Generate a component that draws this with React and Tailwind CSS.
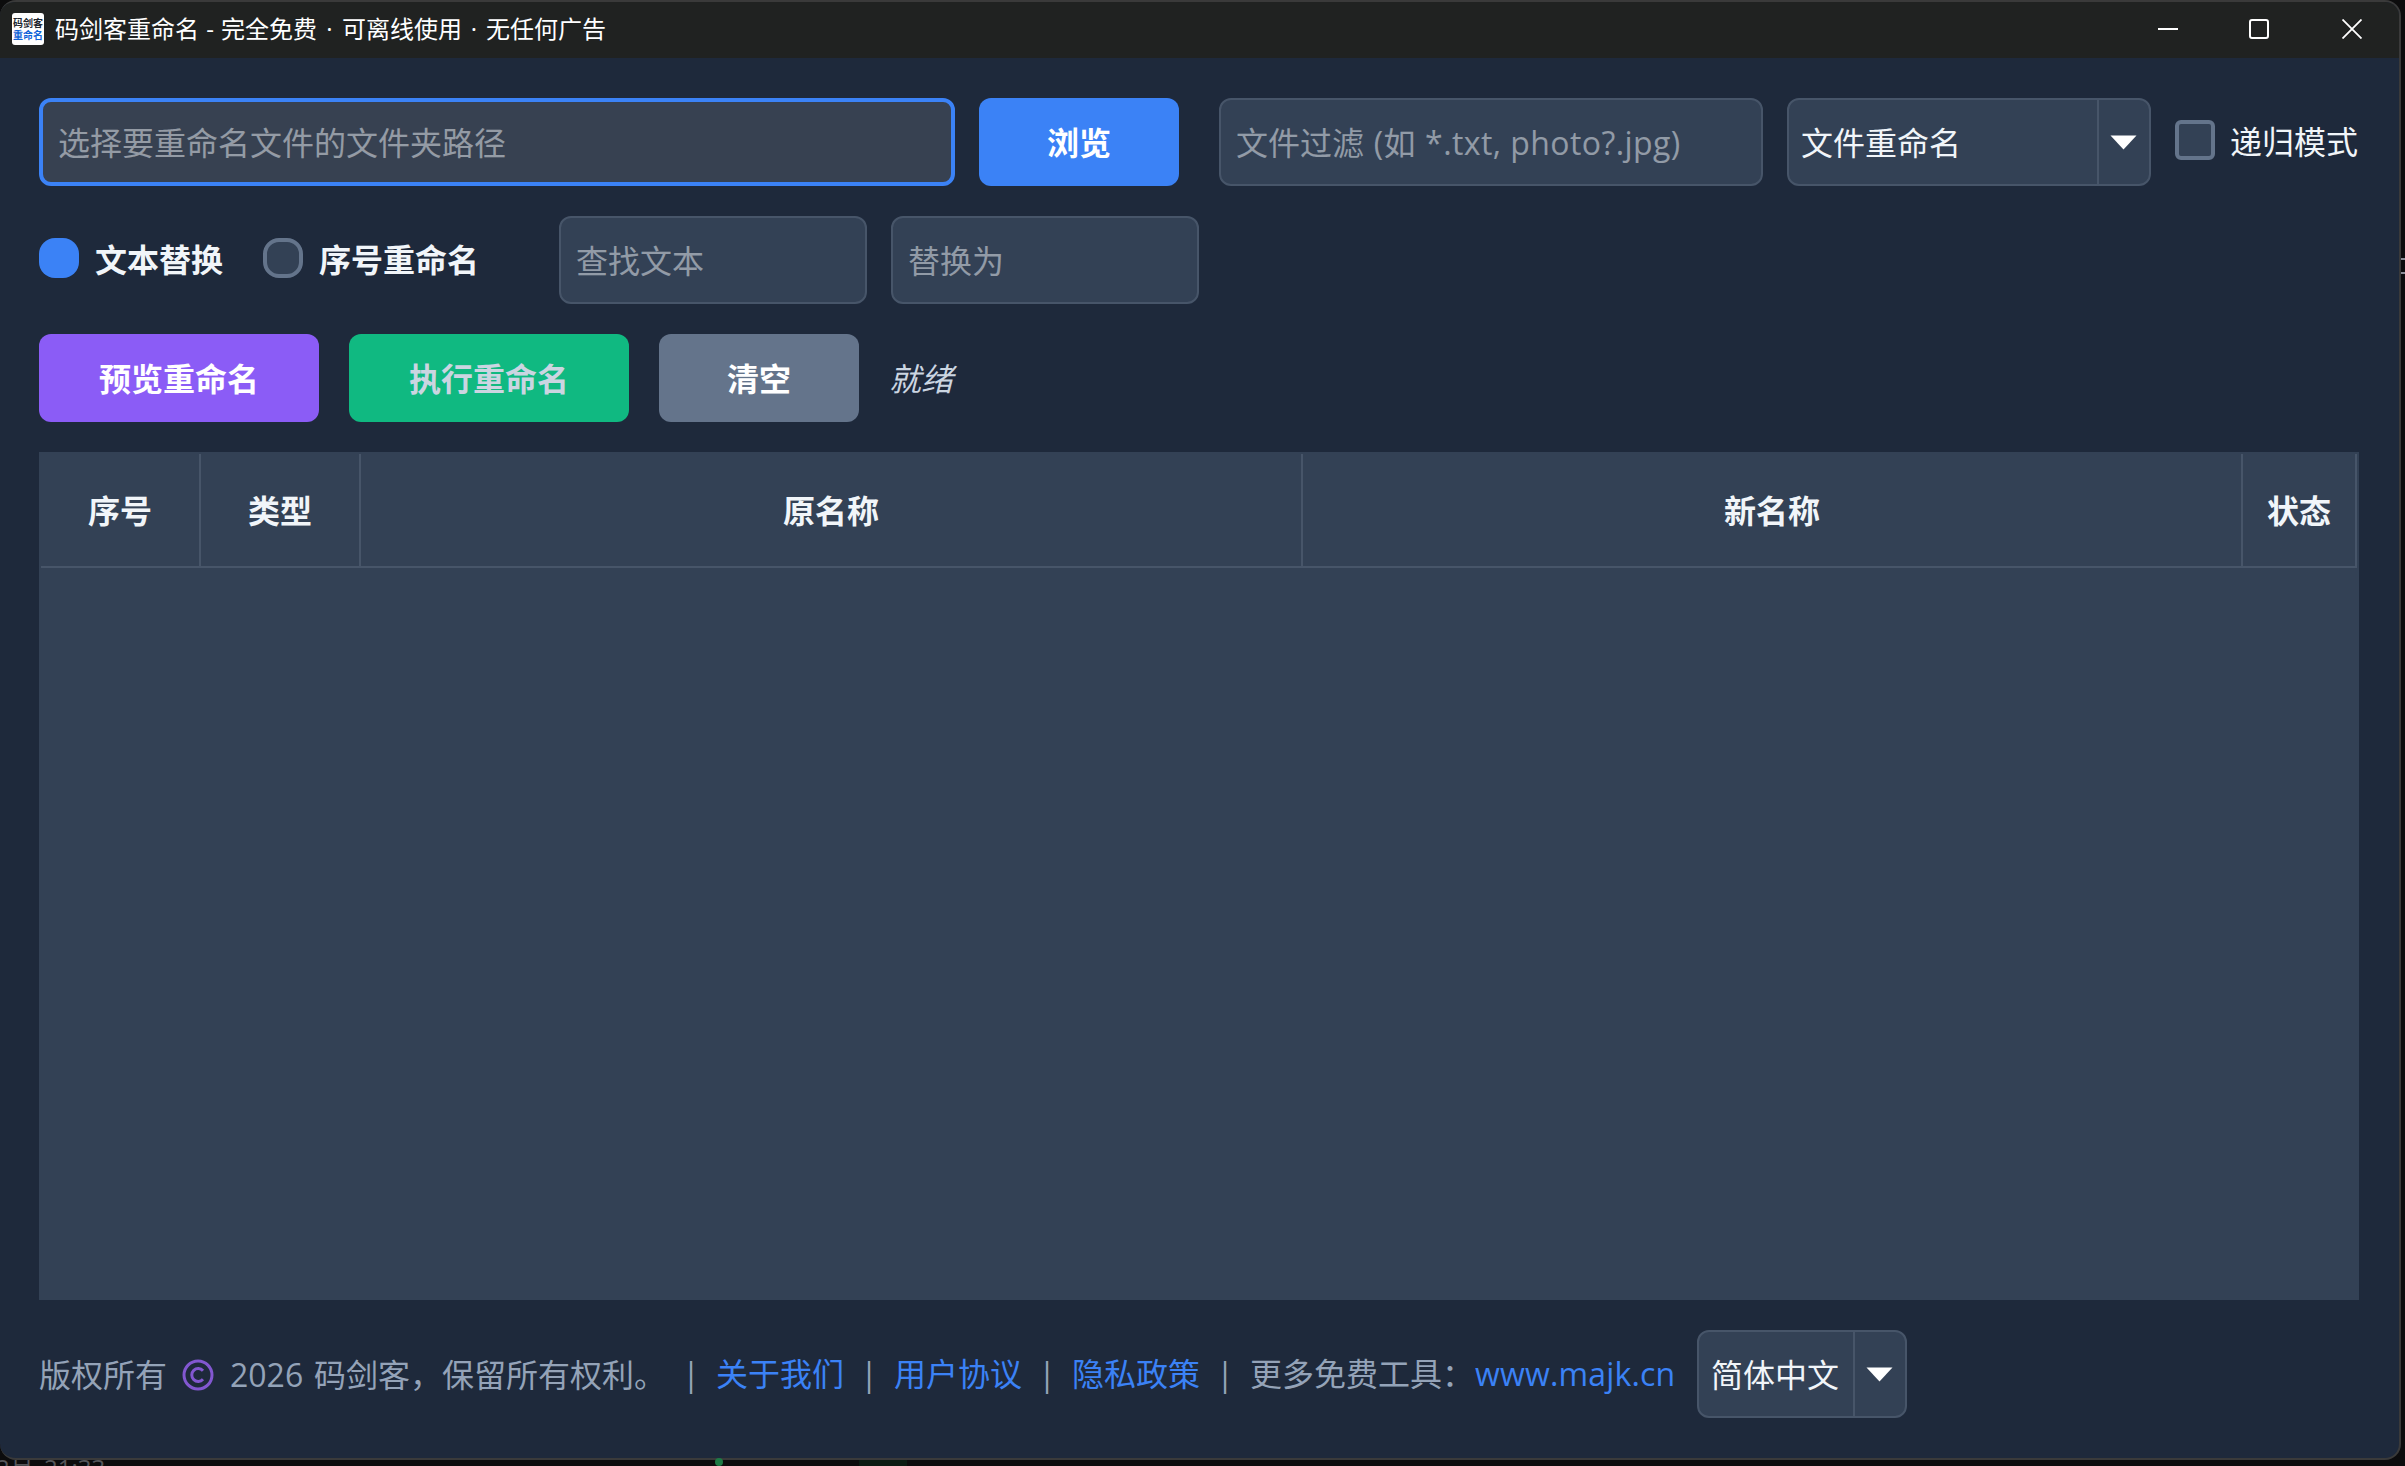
import React from 'react'

function TitleBar() {
  return (
    <header className="h-[56px] shrink-0 flex items-center bg-[#202221] text-white">
      <div className="ml-3 -mt-0.5 w-8 h-8 bg-white rounded-[3px] flex flex-col items-center justify-center overflow-hidden font-bold text-[10px] leading-[12px]" aria-hidden="true">
        <span className="text-[#20262e]">码剑客</span>
        <span className="text-[#0f62d8]">重命名</span>
      </div>
      <h1 className="ml-[11px] -mt-0.5 text-2xl leading-8 flex whitespace-pre">
        <span>码剑客重命名</span>
        <span className="w-[22px] text-center">-</span>
        <span>完全免费</span>
        <span className="w-[25px] text-center">·</span>
        <span>可离线使用</span>
        <span className="w-6 text-center">·</span>
        <span>无任何广告</span>
      </h1>
      <div className="ml-auto mr-[37px] -mt-0.5 flex items-center">
        <svg className="w-5 h-5" viewBox="0 0 20 20" fill="none" stroke="currentColor" strokeWidth="2">
          <path d="M0 10h20" />
        </svg>
        <svg className="ml-[71px] w-5 h-5" viewBox="0 0 20 20" fill="none" stroke="currentColor" strokeWidth="2">
          <rect x="1" y="1" width="18" height="18" rx="2" />
        </svg>
        <svg className="ml-[73px] w-5 h-5" viewBox="0 0 20 20" fill="none" stroke="currentColor" strokeWidth="1.8">
          <path d="M0.5 0.5l19 19M19.5 0.5l-19 19" />
        </svg>
      </div>
    </header>
  )
}

function Field({ className, children }) {
  return (
    <div className={`h-[88px] flex items-center rounded-xl border-2 border-[#475569] bg-[#334155] pl-[15px] pt-px text-[#f1f5f9]/50 whitespace-pre ${className}`}>
      {children}
    </div>
  )
}

function Select({ className, label }) {
  return (
    <div className={`h-[88px] flex rounded-xl border-2 border-[#475569] bg-[#334155] text-[#f1f5f9] ${className}`}>
      <span className="flex-1 flex items-center pl-3 pt-px">{label}</span>
      <span className="w-[52px] pr-0.5 border-l-2 border-[#475569] flex items-center justify-center">
        <svg className="w-[27px] h-[15px]" viewBox="0 0 27 15" fill="#fff">
          <path d="M0.5 0.5h26L13.5 14.5z" />
        </svg>
      </span>
    </div>
  )
}

function Button({ className, children }) {
  return (
    <button className={`h-[88px] pt-0.5 rounded-xl font-bold flex items-center justify-center ${className}`}>
      {children}
    </button>
  )
}

const columns = [
  { title: '序号', width: 'w-[160px]' },
  { title: '类型', width: 'w-[160px]' },
  { title: '原名称', width: 'w-[942px]' },
  { title: '新名称', width: 'w-[940px]' },
  { title: '状态', width: 'w-[114px]' },
]

function FileTable() {
  return (
    <div className="mt-[30px] h-[848px] bg-[#334155] p-0.5">
      <div className="flex w-[2316px] h-[114px] border-b-2 border-[#475569]">
        {columns.map((col) => (
          <div key={col.title} className={`${col.width} pt-0.5 border-r-2 border-[#475569] flex items-center justify-center font-bold`}>
            {col.title}
          </div>
        ))}
      </div>
    </div>
  )
}

function Footer() {
  return (
    <footer className="mt-[30px] h-[88px] flex items-center text-[#94a3b8] whitespace-pre">
      <span className="pt-0.5">版权所有</span>
      <svg className="ml-[15px] mt-0.5 w-8 h-8" viewBox="0 0 32 32" fill="none" stroke="#8257d0" strokeWidth="3">
        <circle cx="16" cy="16" r="14" />
        <path d="M21 11.8a6.4 6.4 0 1 0 0 8.4" />
      </svg>
      <span className="ml-4 w-[84px] pt-0.5">2026</span>
      <span className="pt-0.5">码剑客，保留所有权利。</span>
      <span className="w-[50px] text-center">|</span>
      <a className="text-[#3b82f6]">关于我们</a>
      <span className="w-[50px] text-center">|</span>
      <a className="text-[#3b82f6]">用户协议</a>
      <span className="w-[50px] text-center">|</span>
      <a className="text-[#3b82f6]">隐私政策</a>
      <span className="w-[50px] text-center">|</span>
      <span>更多免费工具：</span>
      <a className="w-[223px] pl-px tracking-[0.15px] text-[#3b82f6]">www.majk.cn</a>
      <Select className="w-[210px]" label="简体中文" />
    </footer>
  )
}

// Sliver of the desktop that shows below the window
function Desktop() {
  return (
    <div className="h-1.5 flex overflow-hidden text-2xl leading-6 text-[#55565a] whitespace-pre" aria-hidden="true">
      <span className="-ml-1 -mt-1 w-12">2月</span>
      <span className="-mt-1">21:33</span>
    </div>
  )
}

export default function App() {
  return (
    <div className="relative w-[2405px] h-[1466px] overflow-hidden bg-[#0c0c0d] text-[32px] leading-[44px] text-[#f1f5f9] font-['Open_Sans','Noto_Sans_CJK_SC',sans-serif]">
      <div className="w-[2401px] h-[1460px] flex flex-col rounded-2xl border-2 border-l-0 border-[#3a3a3a] bg-[#1e293b] overflow-hidden">
        <TitleBar />
        <main className="pl-[39px] pr-10 pt-10">
          <div className="flex items-center">
            <div className="w-[916px] h-[88px] flex items-center rounded-xl border-4 border-[#3b82f6] bg-[#374151] pl-[15px] pt-px text-[#f1f5f9]/50">
              选择要重命名文件的文件夹路径
            </div>
            <Button className="ml-6 w-[200px] bg-[#3b82f6] text-white">浏览</Button>
            <Field className="ml-10 w-[544px]">
              <span>文件过滤</span>
              <span className="pl-px tracking-[0.3px]"> (</span>
              <span>如</span>
              <span className="pl-px tracking-[0.42px]"> *.txt, photo?.jpg)</span>
            </Field>
            <Select className="ml-6 w-[364px]" label="文件重命名" />
            <span className="ml-6 -mt-1 w-10 h-10 rounded-md border-4 border-[#64748b] bg-[#334155]" />
            <span className="ml-[15px]">递归模式</span>
          </div>

          <div className="mt-[30px] flex items-center">
            <span className="-mt-1 w-10 h-10 rounded-2xl bg-[#3b82f6]" />
            <span className="ml-4 font-bold">文本替换</span>
            <span className="ml-10 -mt-1 w-10 h-10 rounded-2xl border-4 border-[#64748b] bg-[#334155]" />
            <span className="ml-4 font-bold">序号重命名</span>
            <Field className="ml-20 w-[308px]">查找文本</Field>
            <Field className="ml-6 w-[308px]">替换为</Field>
          </div>

          <div className="mt-[30px] flex items-center">
            <Button className="w-[280px] bg-[#8b5cf6] text-white">预览重命名</Button>
            <Button className="ml-[30px] w-[280px] bg-[#10b981] text-[#cbd5e1]">执行重命名</Button>
            <Button className="ml-[30px] w-[200px] bg-[#64748b] text-white">清空</Button>
            <span className="ml-[30px] pt-0.5 italic text-[#cbd5e1]">就绪</span>
          </div>

          <FileTable />
          <Footer />
        </main>
      </div>
      <Desktop />
      <span className="absolute left-[715px] top-[1458px] w-2 h-2 rounded-full bg-[#1d7a45]" />
      <span className="absolute left-[859px] top-[1460px] w-12 h-1.5 bg-[#0b1c13]" />
      <span className="absolute left-[2401px] top-[258px] w-1 h-4 border-y-2 border-[#8a8c96]" />
    </div>
  )
}
